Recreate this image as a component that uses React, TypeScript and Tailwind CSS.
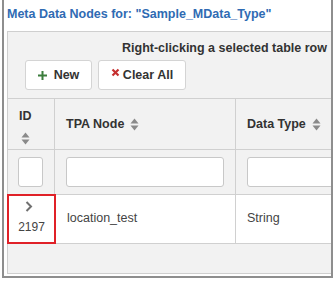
import React from "react";

const SortIcon: React.FC = () => (
  <svg width="9" height="13" viewBox="0 0 9 13" className="inline-block">
    <path d="M4.5 0.5 L8.5 5.5 L0.5 5.5 Z" fill="#8a8a8a" />
    <path d="M0.5 7.5 L8.5 7.5 L4.5 12.5 Z" fill="#8a8a8a" />
  </svg>
);

const App: React.FC = () => {
  return (
    <div
      className="w-[336px] h-[281px] bg-white overflow-hidden"
      style={{ fontFamily: '"Liberation Sans", Arial, sans-serif' }}
    >
      <div className="ml-[2px] w-[331px] h-[278px] border-x-2 border-b-2 border-[#8e8e8e] overflow-hidden flex flex-col">
        {/* Title */}
        <div className="h-[31px] pl-[3px] pb-[2px] flex items-center text-[12.5px] font-bold text-[#2f6bb3] whitespace-nowrap shrink-0">
          Meta Data Nodes for: "Sample_MData_Type"
        </div>

        {/* Panel */}
        <div className="ml-[3px] w-[600px] h-[243px] border border-[#cfcfcf] bg-[#f2f2f2] flex flex-col shrink-0">
          <div className="h-[20px] mt-[6px] pl-[114px] flex items-center text-[12.5px] font-bold text-[#333] whitespace-nowrap">
            Right-clicking a selected table row
          </div>

          {/* Buttons */}
          <div className="flex gap-[6px] pl-[17px] mt-[2px]">
            <button className="w-[67px] h-[30px] bg-white border border-[#d4d4d4] rounded-[3px] flex items-center justify-center gap-[7px] text-[12.5px] font-bold text-[#333]">
              <svg width="9" height="9" viewBox="0 0 9 9">
                <path d="M3.5 0 H5.5 V3.5 H9 V5.5 H5.5 V9 H3.5 V5.5 H0 V3.5 H3.5 Z" fill="#3b7d3c" />
              </svg>
              New
            </button>
            <button className="w-[88px] h-[30px] bg-white border border-[#d4d4d4] rounded-[3px] flex items-center justify-center gap-[3px] text-[12.5px] font-bold text-[#333]">
              <svg width="9" height="9" viewBox="0 0 9 9" className="-mt-[5px]">
                <path d="M1.5 1.5 L7.5 7.5 M7.5 1.5 L1.5 7.5" stroke="#c53030" strokeWidth="2.2" />
              </svg>
              Clear All
            </button>
          </div>

          {/* Table */}
          <div className="mt-[8px] border-t border-[#d0d0d0] flex flex-col">
            {/* Header */}
            <div className="h-[51px] flex border-b border-[#d0d0d0] text-[12.5px] font-bold text-[#333]">
              <div className="w-[47px] border-r border-[#d0d0d0] flex flex-col items-start pl-[11px] pt-[8px]">
                <span>ID</span>
                <span className="pl-[2px] mt-[3px]">
                  <SortIcon />
                </span>
              </div>
              <div className="w-[181px] border-r border-[#d0d0d0] flex items-center pl-[11px] gap-[6px]">
                TPA Node <SortIcon />
              </div>
              <div className="flex-1 flex items-center pl-[11px] gap-[6px]">
                Data Type <SortIcon />
              </div>
            </div>

            {/* Filter row */}
            <div className="h-[45px] flex border-b border-[#d0d0d0]">
              <div className="w-[47px] border-r border-[#d0d0d0] flex items-center pl-[10px]">
                <div className="w-[25px] h-[30px] bg-white border border-[#c8c8c8] rounded-[3px]" />
              </div>
              <div className="w-[181px] border-r border-[#d0d0d0] flex items-center px-[11px]">
                <div className="w-full h-[30px] bg-white border border-[#c8c8c8] rounded-[3px]" />
              </div>
              <div className="flex-1 flex items-center px-[11px]">
                <div className="w-[200px] h-[30px] bg-white border border-[#c8c8c8] rounded-[3px]" />
              </div>
            </div>

            {/* Data row */}
            <div className="h-[49px] flex bg-white border-b border-[#d0d0d0] text-[12.5px] text-[#444]">
              <div className="relative w-[48px] border-r border-[#d0d0d0] flex flex-col items-center justify-center">
                <div className="absolute -left-[1px] right-[-1px] -top-[1px] -bottom-[1px] border-2 border-[#e02128]" />
                <svg width="8" height="11" viewBox="0 0 8 11" className="-mt-[2px] mr-[6px]">
                  <path d="M1.5 1 L6 5.5 L1.5 10" stroke="#707070" strokeWidth="2" fill="none" />
                </svg>
                <span className="mt-[6px] text-[12px] text-[#444]">2197</span>
              </div>
              <div className="w-[180px] border-r border-[#d0d0d0] flex items-center pl-[11px] -mt-[1px]">
                location_test
              </div>
              <div className="flex-1 flex items-center pl-[11px] -mt-[1px]">String</div>
            </div>
          </div>
        </div>
      </div>
    </div>
  );
};

export default App;
